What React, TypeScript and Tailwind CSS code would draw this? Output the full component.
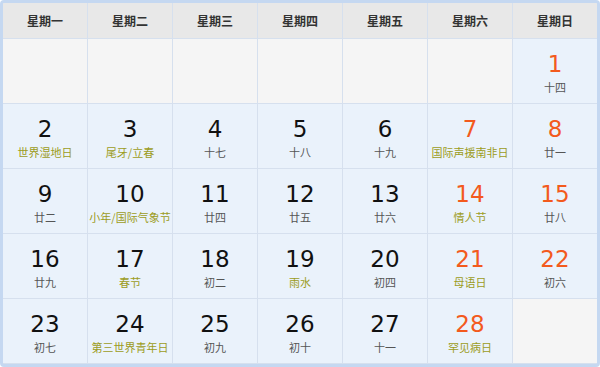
import React from "react";

type Day = { d: number; sub: string; fest?: boolean } | null;

const WEEK = ["星期一", "星期二", "星期三", "星期四", "星期五", "星期六", "星期日"];

const DAYS: Day[] = [
  null, null, null, null, null, null,
  { d: 1, sub: "十四" },
  { d: 2, sub: "世界湿地日", fest: true },
  { d: 3, sub: "尾牙/立春", fest: true },
  { d: 4, sub: "十七" },
  { d: 5, sub: "十八" },
  { d: 6, sub: "十九" },
  { d: 7, sub: "国际声援南非日", fest: true },
  { d: 8, sub: "廿一" },
  { d: 9, sub: "廿二" },
  { d: 10, sub: "小年/国际气象节", fest: true },
  { d: 11, sub: "廿四" },
  { d: 12, sub: "廿五" },
  { d: 13, sub: "廿六" },
  { d: 14, sub: "情人节", fest: true },
  { d: 15, sub: "廿八" },
  { d: 16, sub: "廿九" },
  { d: 17, sub: "春节", fest: true },
  { d: 18, sub: "初二" },
  { d: 19, sub: "雨水", fest: true },
  { d: 20, sub: "初四" },
  { d: 21, sub: "母语日", fest: true },
  { d: 22, sub: "初六" },
  { d: 23, sub: "初七" },
  { d: 24, sub: "第三世界青年日", fest: true },
  { d: 25, sub: "初九" },
  { d: 26, sub: "初十" },
  { d: 27, sub: "十一" },
  { d: 28, sub: "罕见病日", fest: true },
  null,
];

export default function App() {
  return (
    <div className="w-[600px] h-[367px] bg-white">
      <div className="w-[600px] h-[367px] border-[3px] border-[#c5d8f1] rounded-[4px] bg-[#d6e0ee] grid grid-cols-7 grid-rows-[35px_repeat(5,64px)] gap-px overflow-hidden">
        {WEEK.map((w) => (
          <div
            key={w}
            className="bg-[#e8e8e8] flex items-center justify-center text-[12px] font-bold text-[#333] [font-family:'Noto_Sans_CJK_SC',sans-serif]"
          >
            {w}
          </div>
        ))}
        {DAYS.map((day, i) => {
          if (!day) return <div key={i} className="bg-[#f5f5f5]" />;
          const weekend = i % 7 >= 5;
          return (
            <div key={i} className="bg-[#eaf2fb] flex flex-col items-center pt-[12px]">
              <div
                className={`text-[23px] leading-[26px] [font-family:'DejaVu_Sans',sans-serif] ${
                  weekend ? "text-[#f35a1d]" : "text-[#111]"
                }`}
              >
                {day.d}
              </div>
              <div
                className={`mt-[2px] text-[11px] leading-[16px] whitespace-nowrap [font-family:'Noto_Sans_CJK_SC',sans-serif] ${
                  day.fest ? "text-[#9c9c1c]" : "text-[#555]"
                }`}
              >
                {day.sub}
              </div>
            </div>
          );
        })}
      </div>
    </div>
  );
}
